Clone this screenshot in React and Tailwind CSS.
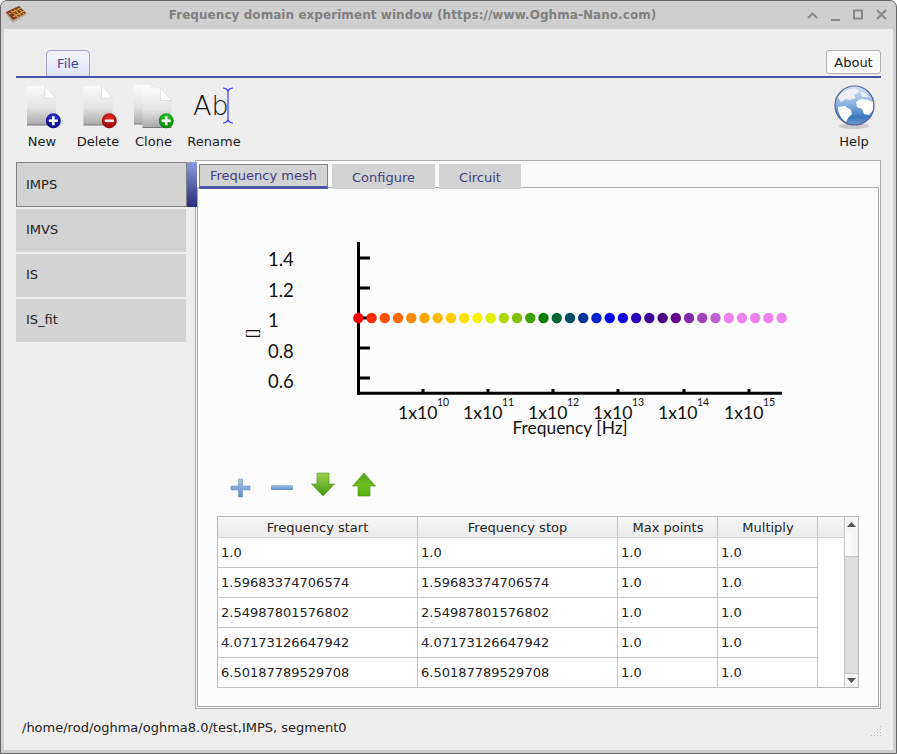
import React from "react";

const dotColors = [
  "#ff0000", "#ff2a00", "#ff5000", "#ff6a00", "#ff8c00", "#ffa500", "#ffbb00", "#ffcc00", "#ffe000",
  "#fff000", "#e0ee00", "#acd800", "#80c000", "#40a000", "#008000", "#006633", "#004d66", "#003399",
  "#0022cc", "#0000ff", "#1400dd", "#2a00bb", "#3a0099", "#4b0082", "#660088", "#8029a8", "#a044b8",
  "#c060d0", "#ee82ee", "#ee82ee", "#ee82ee", "#ee82ee", "#ee82ee",
];

const rows = [
  "1.0",
  "1.59683374706574",
  "2.54987801576802",
  "4.07173126647942",
  "6.50187789529708",
];

function Gradients() {
  return (
    <svg width="0" height="0" className="absolute">
      <defs>
        <linearGradient id="page" x1="0" y1="0" x2="0" y2="1">
          <stop offset="0" stopColor="#fafafa" />
          <stop offset="0.55" stopColor="#e4e4e4" />
          <stop offset="1" stopColor="#a8a8a8" />
        </linearGradient>
        <radialGradient id="blueBadge" cx="0.5" cy="0.35" r="0.7">
          <stop offset="0" stopColor="#3a3ae0" />
          <stop offset="1" stopColor="#00007a" />
        </radialGradient>
        <radialGradient id="redBadge" cx="0.5" cy="0.35" r="0.7">
          <stop offset="0" stopColor="#ee2a2a" />
          <stop offset="1" stopColor="#8a0000" />
        </radialGradient>
        <radialGradient id="greenBadge" cx="0.5" cy="0.35" r="0.7">
          <stop offset="0" stopColor="#2ed02e" />
          <stop offset="1" stopColor="#007a00" />
        </radialGradient>
        <linearGradient id="globe" x1="0" y1="0" x2="0" y2="1">
          <stop offset="0" stopColor="#d6e4f4" />
          <stop offset="0.45" stopColor="#8db4e0" />
          <stop offset="0.8" stopColor="#3a78c0" />
          <stop offset="1" stopColor="#6f9ad0" />
        </linearGradient>
        <linearGradient id="blueBtn" x1="0" y1="0" x2="0" y2="1">
          <stop offset="0" stopColor="#a9c3e6" />
          <stop offset="1" stopColor="#5f8cc6" />
        </linearGradient>
        <linearGradient id="greenArrow" x1="0" y1="0" x2="0" y2="1">
          <stop offset="0" stopColor="#a0d050" />
          <stop offset="1" stopColor="#3f9a10" />
        </linearGradient>
        <linearGradient id="greenArrowUp" x1="0" y1="0" x2="0" y2="1">
          <stop offset="0" stopColor="#4f9d1a" />
          <stop offset="0.5" stopColor="#6cc020" />
          <stop offset="1" stopColor="#58b010" />
        </linearGradient>
      </defs>
    </svg>
  );
}

function Sheet({ x = 7, y = 1 }) {
  return (
    <g transform={`translate(${x} ${y})`}>
      <path d="M0 0H18L29 12V39H0Z" fill="url(#page)" />
      <path d="M0 39H29" stroke="#777" strokeWidth="1" />
      <path d="M18 0V12H29Z" fill="#fff" stroke="#ccc" strokeWidth="0.5" />
    </g>
  );
}

function Badge({ cx, cy, fill, kind }) {
  return (
    <g>
      <circle cx={cx} cy={cy} r="7.5" fill={fill} />
      <path d={`M${cx - 4.5} ${cy}H${cx + 4.5}`} stroke="#fff" strokeWidth="2.6" />
      {kind === "plus" && <path d={`M${cx} ${cy - 4.5}V${cy + 4.5}`} stroke="#fff" strokeWidth="2.6" />}
    </g>
  );
}

function ToolButton({ label, width, children }) {
  return (
    <div className={`flex flex-col items-center ${width}`}>
      <div className="h-[49px] flex items-start justify-center">{children}</div>
      <div className="h-[16px] leading-[16px] text-[13px] text-[#1a1a1a]">{label}</div>
    </div>
  );
}

function Chart() {
  const yTicks = [
    [258, "1.4", 259],
    [288, "1.2", 290],
    [318, "1", 320],
    [348, "0.8", 351],
    [378, "0.6", 381],
  ];
  const xTicks = [
    [423, 398, "10"],
    [488, 463, "11"],
    [553, 528, "12"],
    [618, 593, "13"],
    [684, 658, "14"],
    [749, 724, "15"],
  ];
  return (
    <svg width="682" height="270" viewBox="198 188 682 270" className="block">
      <g fill="#111" fontFamily="Lato, sans-serif">
        {yTicks.map(([ty, t, ly]) => (
          <g key={t}>
            <path d={`M358 ${ty}H370`} stroke="#000" strokeWidth="3" />
            <text x="268" y={ly + 6.5} fontSize="18.5">{t}</text>
          </g>
        ))}
        {xTicks.map(([tx, lx, e]) => (
          <g key={e}>
            <path d={`M${tx} 393V389`} stroke="#000" strokeWidth="3" />
            <text x={lx} y="419" fontSize="17.6">1x10</text>
            <text x={lx + 39} y="405.5" fontSize="10.5">{e}</text>
          </g>
        ))}
        <text x="570" y="434" textAnchor="middle" fontSize="17.4">Frequency [Hz]</text>
        <text transform="translate(258 333.5) rotate(-90)" textAnchor="middle" fontSize="16">[]</text>
      </g>
      <path d="M358.5 242V395" stroke="#000" strokeWidth="3" />
      <path d="M357 393.3H782" stroke="#000" strokeWidth="3" />
      {dotColors.map((c, i) => (
        <circle key={i} cx={358.3 + i * 13.23} cy="318" r="5.2" fill={c} />
      ))}
    </svg>
  );
}

function Globe() {
  return (
    <svg width="44" height="46" viewBox="0 0 44 46">
      <ellipse cx="22" cy="41" rx="15" ry="3" fill="#bbb" opacity="0.7" />
      <circle cx="22.5" cy="20.5" r="19.5" fill="url(#globe)" stroke="#5a5f98" strokeWidth="1.2" />
      <path d="M6 12C10 6 18 3 25 4L27 7L22 10L24 13L18 15L14 14L9 17Z" fill="#eef2f8" />
      <path d="M6 22L13 21L19 25L20 29L16 33L14 37C10 35 6 29 6 22Z" fill="#fff" />
      <path d="M24 17L29 14L36 15L41 17L41 25L37 30L32 29L30 24L25 22Z" fill="#fff" />
      <path d="M28 7L34 8L37 12L30 12Z" fill="#e8eef6" />
    </svg>
  );
}

export default function App() {
  return (
    <div className="relative w-[897px] h-[754px] overflow-hidden bg-[#cfcfcf] border border-[#666] rounded-t-[7px] flex flex-col font-['DejaVu_Sans',sans-serif] text-[13px]">
      <Gradients />
      {/* title bar */}
      <div className="h-[28px] flex items-center shrink-0">
        <div className="w-[30px] pl-[3px]">
          <svg width="24" height="20" viewBox="0 0 24 20" className="block">
            <path d="M1 8L15 1L23 9L9 18Z" fill="#b5a894" />
            <path d="M2 7L15 1L22 8L9 15Z" fill="#7a3b20" />
            <path d="M7 6L14 12M10 4.5L17 10.5M14 3L20 9M5 9L17 3M9 12L20 6" stroke="#d8a040" strokeWidth="1.1" />
          </svg>
        </div>
        <div className="flex-1 text-center font-bold text-[#808080] text-[12px] tracking-[0.06px]">
          Frequency domain experiment window (https://www.Oghma-Nano.com)
        </div>
        <div className="w-[102px] pr-[8px] flex justify-end">
          <svg width="82" height="16" viewBox="0 0 82 16" fill="none" stroke="#888" strokeWidth="2">
            <path d="M2 11L6.5 6.5L11 11" />
            <path d="M25 13H34" />
            <rect x="48" y="3.5" width="8" height="8" />
            <path d="M71 3L80 12M80 3L71 12" />
          </svg>
        </div>
      </div>

      {/* window body */}
      <div className="mx-[3px] mb-[3px] flex-1 min-h-0 bg-[#eeeeee] flex flex-col">
        {/* menu tabs */}
        <div className="mx-[12px] mt-[21px] h-[28px] border-b-2 border-[#4a55a5] flex justify-between items-start shrink-0">
          <div className="ml-[30px] w-[44px] h-[26px] rounded-t-[5px] border border-b-0 border-[#a0a4c0] bg-gradient-to-b from-[#f4f5fb] to-[#dfe3f6] text-center leading-[26px] text-[#45458a]">
            File
          </div>
          <div className="w-[55px] h-[24px] rounded-[3px] border border-[#b0b0b0] bg-[#fafafa] text-center leading-[23px] text-[#222]">
            About
          </div>
        </div>

        {/* toolbar */}
        <div className="h-[82px] shrink-0 pt-[7px] pl-[10px] pr-[11px] flex">
          <ToolButton label="New" width="w-[56px]">
            <svg width="44" height="44" viewBox="0 0 44 44">
              <Sheet x={7} y={1} />
              <Badge cx={33.3} cy={35.7} fill="url(#blueBadge)" kind="plus" />
            </svg>
          </ToolButton>
          <ToolButton label="Delete" width="w-[56px]">
            <svg width="44" height="44" viewBox="0 0 44 44">
              <Sheet x={7.5} y={1} />
              <Badge cx={33.3} cy={35.7} fill="url(#redBadge)" kind="minus" />
            </svg>
          </ToolButton>
          <ToolButton label="Clone" width="w-[55px]">
            <svg width="44" height="44" viewBox="0 0 44 44">
              <Sheet x={2} y={0} />
              <Sheet x={10.5} y={3.5} />
              <Badge cx={34.2} cy={35.7} fill="url(#greenBadge)" kind="plus" />
            </svg>
          </ToolButton>
          <ToolButton label="Rename" width="w-[66px]">
            <svg width="48" height="44" viewBox="0 0 48 44">
              <text x="3" y="30" fontSize="27" fontWeight="200" fill="#111" fontFamily="'DejaVu Sans', sans-serif">Ab</text>
              <path d="M33 3C35 3 37 4 38 6C39 4 41 3 43 3M38 6V35M33 38C35 38 37 37 38 35C39 37 41 38 43 38" fill="none" stroke="#3a3af0" strokeWidth="1.2" />
            </svg>
          </ToolButton>
          <div className="flex-1" />
          <ToolButton label="Help" width="w-[56px]">
            <Globe />
          </ToolButton>
        </div>

        {/* main area */}
        <div className="mx-[12px] flex items-start shrink-0 relative">
          <div className="w-[170px] pt-[2px] flex flex-col gap-[2px] shrink-0">
            <div className="h-[45px] bg-[#d3d3d3] border border-[#808080] pl-[9px] flex items-center text-[#222] w-[171px]">IMPS</div>
            <div className="h-[43px] bg-[#d3d3d3] pl-[10px] pb-[2px] flex items-center text-[#222]">IMVS</div>
            <div className="h-[43px] bg-[#d3d3d3] pl-[10px] pb-[2px] flex items-center text-[#222]">IS</div>
            <div className="h-[43px] bg-[#d3d3d3] pl-[10px] pb-[2px] flex items-center text-[#222]">IS_fit</div>
          </div>
          <div className="ml-[9px] w-[686px] h-[549px] border border-[#aaaaaa] bg-[#fafafa] p-[1px] flex flex-col">
            {/* tabs */}
            <div className="relative z-10 flex items-start pt-[2px] pl-[2px] gap-[4px] h-[26px] -mb-[1px] shrink-0 text-[#3f3f80]">
              <div className="w-[129px] h-[25px] bg-[#d3d3d3] border border-[#808080] border-b-[3px] border-b-[#4a55a5] text-center leading-[21px]">Frequency mesh</div>
              <div className="w-[103px] h-[25px] bg-[#d3d3d3] text-center leading-[27px]">Configure</div>
              <div className="w-[82px] h-[25px] bg-[#d3d3d3] text-center leading-[27px]">Circuit</div>
            </div>
            <div className="flex-1 min-h-0 border border-[#aaaaaa] bg-[#fcfcfc]">
              <Chart />
              {/* table toolbar */}
              <div className="h-[58px] pl-[31px] pt-[14px] flex gap-[17px] items-start">
                <svg width="24" height="26" viewBox="0 0 24 26">
                  <path d="M9.5 7H13.5V14H21V18H13.5V25H9.5V18H2V14H9.5Z" fill="url(#blueBtn)" stroke="#6e95c8" strokeWidth="0.6" />
                </svg>
                <svg width="24" height="26" viewBox="0 0 24 26">
                  <rect x="1" y="13" width="22" height="5" rx="1" fill="url(#blueBtn)" />
                </svg>
                <svg width="24" height="26" viewBox="0 0 24 26">
                  <path d="M6 1H18V12H23.5L12 24L0.5 12H6Z" fill="url(#greenArrow)" stroke="#4f8f1a" strokeWidth="0.6" />
                </svg>
                <svg width="24" height="26" viewBox="0 0 24 26">
                  <path d="M12 1L23.5 14H18V24H6V14H0.5Z" fill="url(#greenArrowUp)" stroke="#4f8f1a" strokeWidth="0.6" />
                </svg>
              </div>
              {/* table */}
              <div className="ml-[19px] w-[642px] h-[172px] border border-[#b9b9b9] flex bg-white">
                <div className="flex-1">
                  <div className="h-[21px] flex bg-gradient-to-b from-[#f6f6f6] to-[#ebebeb] border-b border-[#d0d0d0] text-[#222] leading-[21px]">
                    <div className="w-[200px] border-r border-[#c4c4c4] text-center">Frequency start</div>
                    <div className="w-[200px] border-r border-[#c4c4c4] text-center">Frequency stop</div>
                    <div className="w-[100px] border-r border-[#c4c4c4] pl-[1px] text-center">Max points</div>
                    <div className="w-[100px] pl-[1px] border-r border-[#c4c4c4] text-center">Multiply</div>
                  </div>
                  {rows.map((v) => (
                    <div key={v} className="h-[30px] flex text-[#222] leading-[29px]">
                      <div className="w-[200px] pl-[3px] border-r border-b border-[#c4c4c4]">{v}</div>
                      <div className="w-[200px] pl-[3px] border-r border-b border-[#c4c4c4]">{v}</div>
                      <div className="w-[100px] pl-[3px] border-r border-b border-[#c4c4c4]">1.0</div>
                      <div className="w-[100px] pl-[3px] border-r border-b border-[#c4c4c4]">1.0</div>
                    </div>
                  ))}
                </div>
                {/* scrollbar */}
                <div className="w-[14px] border-l border-[#c4c4c4] flex flex-col bg-[#dedede]">
                  <div className="h-[14px] bg-[#f4f4f4] flex items-center justify-center">
                    <svg width="9" height="5" viewBox="0 0 9 5"><path d="M0 5L4.5 0L9 5Z" fill="#555" /></svg>
                  </div>
                  <div className="h-[26px] bg-gradient-to-r from-[#fbfbfb] to-[#f2f2f2] border-b border-[#c4c4c4]" />
                  <div className="flex-1" />
                  <div className="h-[14px] bg-[#f4f4f4] border-t border-[#c4c4c4] flex items-center justify-center">
                    <svg width="9" height="5" viewBox="0 0 9 5"><path d="M0 0L4.5 5L9 0Z" fill="#555" /></svg>
                  </div>
                </div>
              </div>
            </div>
          </div>
          <div className="absolute left-[171px] top-[2px] w-[10px] h-[45px] bg-gradient-to-b from-[#8f9be0] to-[#2c2c78]" />
        </div>

        {/* status bar */}
        <div className="flex-1 relative pl-[18px] flex items-center text-[#222]">
          <span className="mt-[-3px]">/home/rod/oghma/oghma8.0/test,IMPS, segment0</span>
          <svg width="11" height="11" viewBox="0 0 11 11" className="absolute right-[11px] bottom-[14px]" fill="#bbb">
            <rect x="9" y="1" width="1" height="1" />
            <rect x="6" y="4" width="1" height="1" />
            <rect x="9" y="4" width="1" height="1" />
            <rect x="3" y="7" width="1" height="1" />
            <rect x="6" y="7" width="1" height="1" />
            <rect x="9" y="7" width="1" height="1" />
            <rect x="0" y="10" width="1" height="1" />
            <rect x="3" y="10" width="1" height="1" />
            <rect x="6" y="10" width="1" height="1" />
            <rect x="9" y="10" width="1" height="1" />
          </svg>
        </div>
      </div>
    </div>
  );
}
